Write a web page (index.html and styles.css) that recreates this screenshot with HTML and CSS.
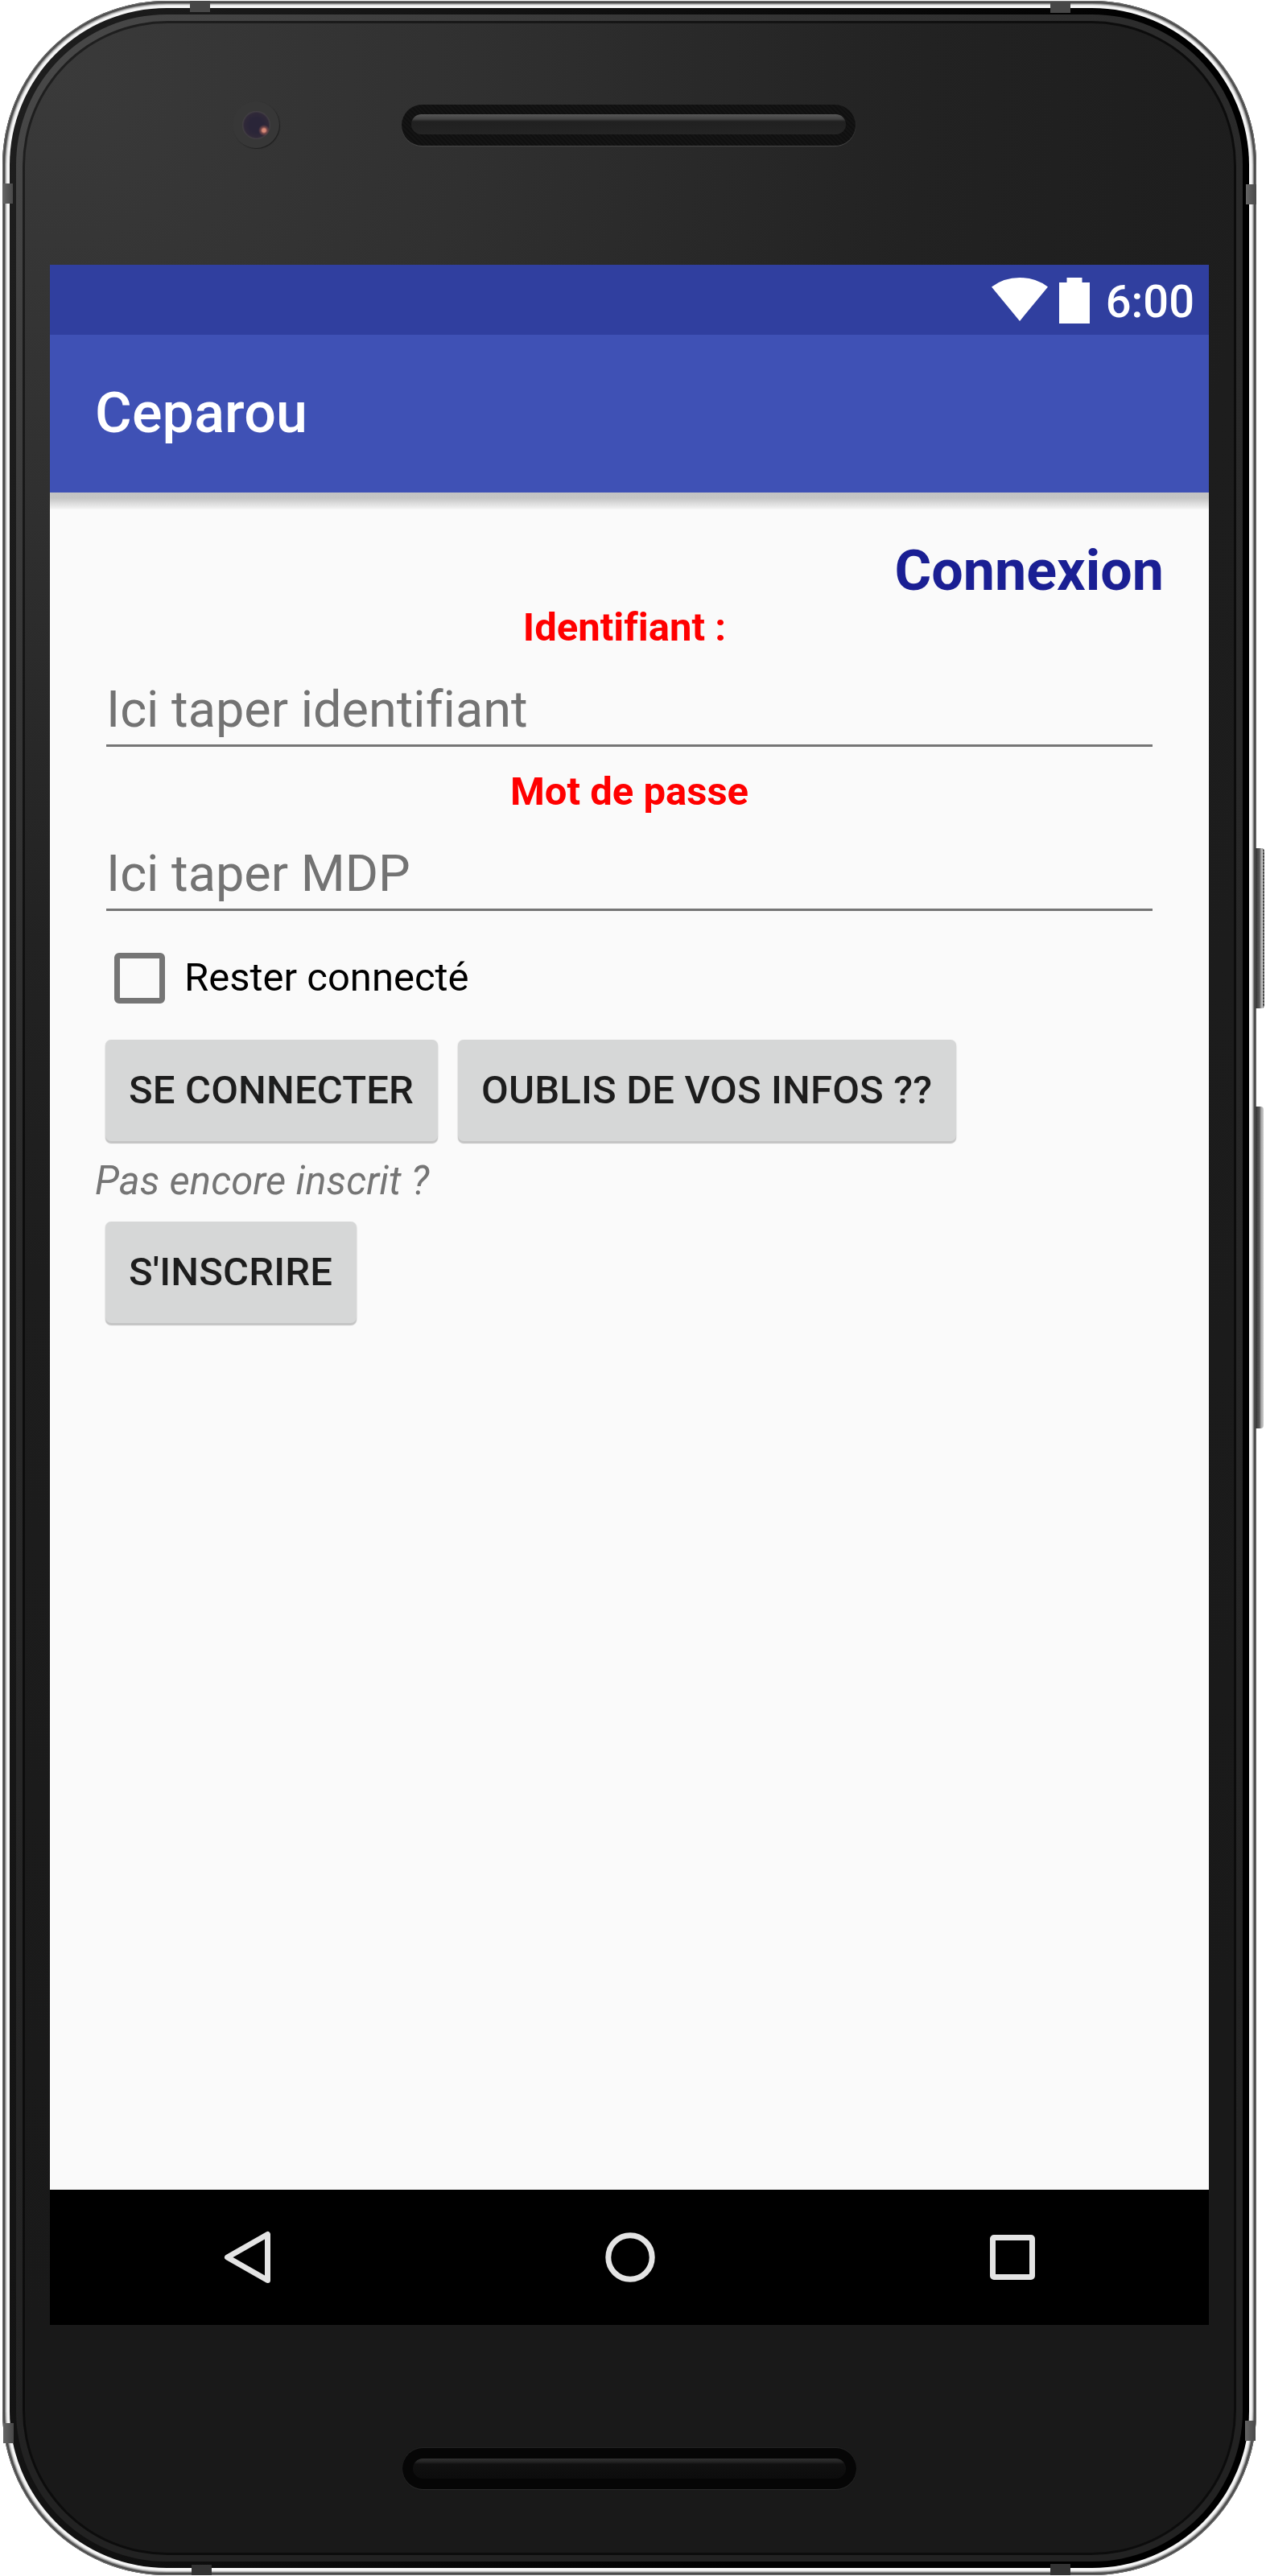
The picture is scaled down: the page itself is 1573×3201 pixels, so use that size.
FILE: index.html
```html
<!DOCTYPE html>
<html lang="fr">
<head>
<meta charset="utf-8">
<title>Ceparou</title>
<link rel="stylesheet" href="styles.css">
</head>
<body>
<div class="phone">
  <div class="frame"><div class="bezel"><div class="rim"><div class="groove"><div class="face">
    <div class="forehead">
      <div class="camera"><div class="lens"></div></div>
      <div class="speaker"><div class="slot"></div></div>
    </div>
    <main class="screen">
      <div class="status-bar">
        <svg class="wifi" width="70" height="54" viewBox="0 0 70 54"><path d="M0 11.500Q15 0 35 0T70 11.500L35 54Z" fill="#fff"/></svg>
        <svg class="battery" width="38" height="57" viewBox="0 0 38 57"><path d="M9.500 0h19v6H38v51H0V6h9.500z" fill="#fff"/></svg>
        <span class="clock">6:00</span>
      </div>
      <header class="app-bar"><h1>Ceparou</h1></header>
      <form class="content">
        <h2 class="heading">Connexion</h2>
        <div class="label">Identifiant :&nbsp;</div>
        <div class="field">Ici taper identifiant</div>
        <div class="label label-password">Mot de passe</div>
        <div class="field">Ici taper MDP</div>
        <div class="remember"><span class="checkbox"></span><span>Rester connecté</span></div>
        <div class="actions">
          <button class="btn" type="button">SE CONNECTER</button>
          <button class="btn" type="button">OUBLIS DE VOS INFOS ??</button>
        </div>
        <p class="hint">Pas encore inscrit ?</p>
        <div class="signup"><button class="btn" type="button">S'INSCRIRE</button></div>
      </form>
      <nav class="nav-bar">
        <svg width="66" height="70" viewBox="0 0 66 70"><path d="M57.500 6.500v57L7.500 35z" fill="none" stroke="#e4e4e4" stroke-width="7" stroke-linejoin="round"/></svg>
        <svg width="66" height="70" viewBox="0 0 66 70"><circle cx="33" cy="35" r="27.200" fill="none" stroke="#e4e4e4" stroke-width="7"/></svg>
        <svg width="66" height="70" viewBox="0 0 66 70"><rect x="8.500" y="10.500" width="49" height="49" rx="1.500" fill="none" stroke="#e4e4e4" stroke-width="7"/></svg>
      </nav>
    </main>
    <div class="chin"><div class="speaker speaker-low"><div class="slot"></div></div></div>
  </div></div></div></div></div>
  <i class="band band-tl"></i><i class="band band-tr"></i>
  <i class="band band-bl"></i><i class="band band-br"></i>
  <i class="band side band-lt"></i><i class="band side band-rt"></i>
  <i class="band side band-lb"></i><i class="band side band-rb"></i>
  <i class="key power"></i><i class="key volume"></i>
</div>
</body>
</html>
```
FILE: styles.css
```css
* { box-sizing: border-box; }
body { margin: 0; background: #fff; font-family: Roboto, "Noto Sans", sans-serif; font-variant-ligatures: none; }
h1, h2, p { margin: 0; }

/* Device shell, from the metal edge inwards */
.phone { position: relative; width: 1573px; height: 3201px; padding: 1px 0 1px 3px; }
.frame {
  width: 1558px; height: 3199px; padding: 9px; border-radius: 204px;
  background: #f6f6f6;
  box-shadow: inset 0 0 0 1px #6d6d6d, inset 0 0 0 3px #4b4b4b, inset 0 0 0 4px #858585, inset 0 0 0 5px #bcbcbc, inset 0 0 0 6px #e2e2e2;
}
.bezel { height: 100%; padding: 8px; border-radius: 195px; background: linear-gradient(100deg, #1e1e1e, #000 70%); }
.rim {
  height: 100%; padding: 8px; border-radius: 187px;
  background: radial-gradient(circle at 40px 40px, #484848, #363636 800px, #292929 1500px, #222 3000px);
}
.groove { height: 100%; padding: 3px; border-radius: 180px; background: radial-gradient(circle at 0 0, #202020, #0c0c0c 1400px); }
.face {
  display: flex; flex-direction: column; height: 100%; border-radius: 177px;
  background: radial-gradient(circle at 40px 60px, #3a3a3a, #303030 520px, #222 1080px, #1d1d1d 1500px, #191919 2800px);
}

.forehead { display: flex; align-items: flex-start; height: 300px; padding: 97px 0 0 258px; gap: 152px; }
.camera {
  display: grid; place-items: center; width: 58px; height: 58px; border-radius: 50%;
  background: #373737; box-shadow: 1px 1px 1px #202020;
}
.lens {
  width: 35px; height: 35px; border-radius: 50%;
  background: radial-gradient(circle at 27px 24px, #d98a78 0 2px, #74484a 4px, transparent 7px), radial-gradient(circle, #2a2538 0 9px, #302938 15px, #4a4848 18px);
}
.speaker {
  width: 564px; height: 51px; margin-top: 4px; padding: 12px 12px 14px; border-radius: 26px;
  background: repeating-linear-gradient(45deg, #141414 0 2px, #101010 2px 4px); box-shadow: 0 1px 1px #484848;
}
.slot { height: 25px; border-radius: 13px; background: linear-gradient(#575757, #414141 6px, #202020 9px, #242424); }
.chin { padding: 153px 0 0 469px; }
.speaker-low { margin: 0; padding: 13px 13px; background: #060606; box-shadow: 0 1px 1px #2a2a2a, 0 -1px 1px #242424; }
.speaker-low .slot { background: linear-gradient(#303030, #242424 4px, #101010 7px, #0c0c0c); }

/* Antenna bands and side keys sit over the metal edge */
.band { position: absolute; width: 25px; height: 14px; background: #474747; }
.side { width: 13px; height: 25px; background: linear-gradient(90deg, #666, #484848); }
.band-tl { left: 236px; top: 1px; }
.band-tr { left: 1305px; top: 2px; }
.band-bl { left: 238px; top: 3187px; height: 13px; background: #333; }
.band-br { left: 1305px; top: 3186px; background: #333; }
.band-lt { left: 3px; top: 228px; }
.band-rt { left: 1548px; top: 229px; }
.band-lb { left: 4px; top: 3011px; }
.band-rb { left: 1547px; top: 3008px; }
.key { position: absolute; left: 1560px; width: 10px; border-radius: 0 4px 4px 0; background: linear-gradient(90deg, #333, #595959 5px, #aaa 7px, #ccc); }
.power { top: 1054px; height: 199px; border-right: 2px dotted #888; width: 11px; }
.volume { top: 1375px; height: 400px; }

/* Screen */
.screen { display: flex; flex-direction: column; flex: none; width: 1440px; height: 2560px; margin-left: 31px; background: #fafafa; }
.status-bar { display: flex; align-items: flex-start; justify-content: flex-end; height: 87px; padding: 16px 18px 0 0; background: #303f9f; color: #fff; }
.battery { margin: 0 20px 0 14px; }
.clock { font-size: 56px; font-weight: 500; line-height: 60px; }
.app-bar { flex: none; height: 196px; padding: 0 56px; background: #3f51b5; color: #fff; }
.app-bar h1 { font-size: 70px; font-weight: 500; line-height: 194px; letter-spacing: .2px; }
.content {
  flex: 1; padding: 56px; color: #000; font-size: 49px; line-height: 60px;
  background: linear-gradient(#c3c3c3, #c5c5c5 7px, #f2f2f2 20px, #fafafa 21px, #fafafa);
}
.heading { color: #1a1f93; font-size: 70px; line-height: 82px; font-weight: 700; text-align: right; }
.label { color: #f00; font-weight: 700; text-align: center; }
.label-password { margin-top: 26px; }
.field { margin: 34px 14px 0 14px; padding-bottom: 6px; border-bottom: 3px solid #757575; color: #737373; font-size: 63px; line-height: 75px; }
.remember { display: flex; align-items: center; gap: 24px; margin: 51px 0 0 24px; height: 64px; }
.checkbox { width: 63px; height: 63px; border: 7px solid #757575; border-radius: 6px; }
.actions { display: flex; gap: 25px; margin: 45px 0 0 13px; }
.btn {
  height: 126px; padding: 0 30px 0 29px; border: 0; border-radius: 7px; background: #d6d7d7; color: #1d1d1d;
  font: 500 49px/126px Roboto, "Noto Sans", sans-serif; letter-spacing: .16px; white-space: nowrap;
  box-shadow: 0 3px 1px #c4c4c4, 0 1px 2px #ccc;
}
.hint { margin-top: 20px; color: #757575; font-style: italic; letter-spacing: .1px; }
.signup { display: flex; margin: 20px 0 0 13px; }
.nav-bar { display: flex; align-items: center; justify-content: space-between; height: 168px; padding: 0 211px 0 213px; background: #000; }
```
